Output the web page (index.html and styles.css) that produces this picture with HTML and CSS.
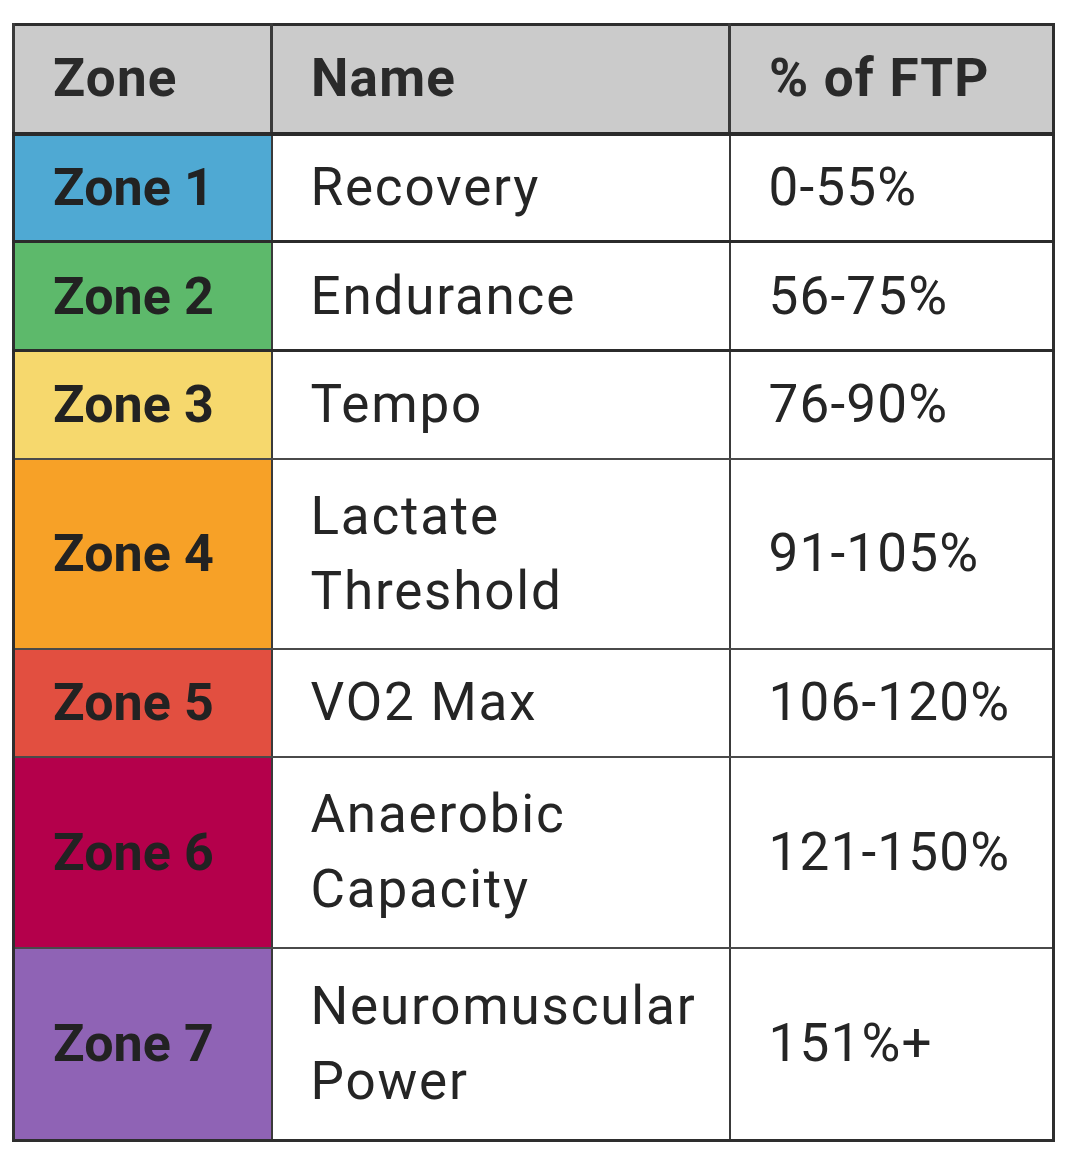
FILE: index.html
```html
<!DOCTYPE html>
<html lang="en">
<head>
<meta charset="utf-8">
<title>Power Zones</title>
<link rel="stylesheet" href="styles.css">
</head>
<body>
<table class="zones">
  <colgroup>
    <col class="c-zone">
    <col class="c-name">
    <col class="c-pct">
  </colgroup>
  <thead>
    <tr class="row-head">
      <th>Zone</th>
      <th>Name</th>
      <th>% of FTP</th>
    </tr>
  </thead>
  <tbody>
    <tr class="row-s thick">
      <td class="zone z1">Zone 1</td>
      <td class="name">Recovery</td>
      <td class="pct">0-55%</td>
    </tr>
    <tr class="row-s2 thick">
      <td class="zone z2">Zone 2</td>
      <td class="name">Endurance</td>
      <td class="pct">56-75%</td>
    </tr>
    <tr class="row-s">
      <td class="zone z3">Zone 3</td>
      <td class="name">Tempo</td>
      <td class="pct">76-90%</td>
    </tr>
    <tr class="row-l">
      <td class="zone z4">Zone 4</td>
      <td class="name">Lactate<br>Threshold</td>
      <td class="pct">91-105%</td>
    </tr>
    <tr class="row-s">
      <td class="zone z5">Zone 5</td>
      <td class="name">VO2 Max</td>
      <td class="pct">106-120%</td>
    </tr>
    <tr class="row-l2">
      <td class="zone z6">Zone 6</td>
      <td class="name">Anaerobic<br>Capacity</td>
      <td class="pct">121-150%</td>
    </tr>
    <tr class="row-last">
      <td class="zone z7">Zone 7</td>
      <td class="name">Neuromuscular<br>Power</td>
      <td class="pct">151%+</td>
    </tr>
  </tbody>
</table>
</body>
</html>
```

FILE: styles.css
```css
html, body {
  margin: 0;
  padding: 0;
  background: #ffffff;
}

body {
  padding: 23px 0 0 12px;
  font-family: Roboto, "Liberation Sans", Arial, sans-serif;
  color: #252525;
}

.zones {
  border-collapse: collapse;
  table-layout: fixed;
  width: 1040px;
  border: 3px solid #2e2e2e;
}

.c-zone { width: 258px; }
.c-name { width: 458px; }
.c-pct { width: 324px; }

.zones th,
.zones td {
  padding: 0 0 0 38px;
  text-align: left;
  vertical-align: middle;
  font-size: 53px;
  line-height: 75px;
  border-left: 2px solid #3a3a3a;
  border-bottom: 2px solid #4a4a4a;
}

.zones th {
  background: #cbcbcb;
  font-weight: 700;
  color: #2a2a2a;
  letter-spacing: 1.2px;
  border-bottom: 4px solid #2b2b2b;
  border-left-width: 3px;
}

.zones td.zone {
  font-size: 52px;
  font-weight: 700;
  letter-spacing: 0.1px;
  color: #222222;
}

.zones td.name {
  font-weight: 400;
  letter-spacing: 1.8px;
}

.zones td.pct {
  font-weight: 400;
  letter-spacing: 1.2px;
}

.row-head { height: 109px; }
.row-s { height: 108px; }
.row-s2 { height: 109px; }
.row-l { height: 190px; }
.row-l2 { height: 191px; }
.row-last { height: 193px; }

.thick td {
  border-bottom: 3px solid #2b2b2b;
}

.z1 { background: #4fa9d3; }
.z2 { background: #5db96b; }
.z3 { background: #f6d86d; }
.z4 { background: #f7a127; }
.z5 { background: #e24f40; }
.z6 { background: #b4004b; }
.z7 { background: #8f63b5; }
```
